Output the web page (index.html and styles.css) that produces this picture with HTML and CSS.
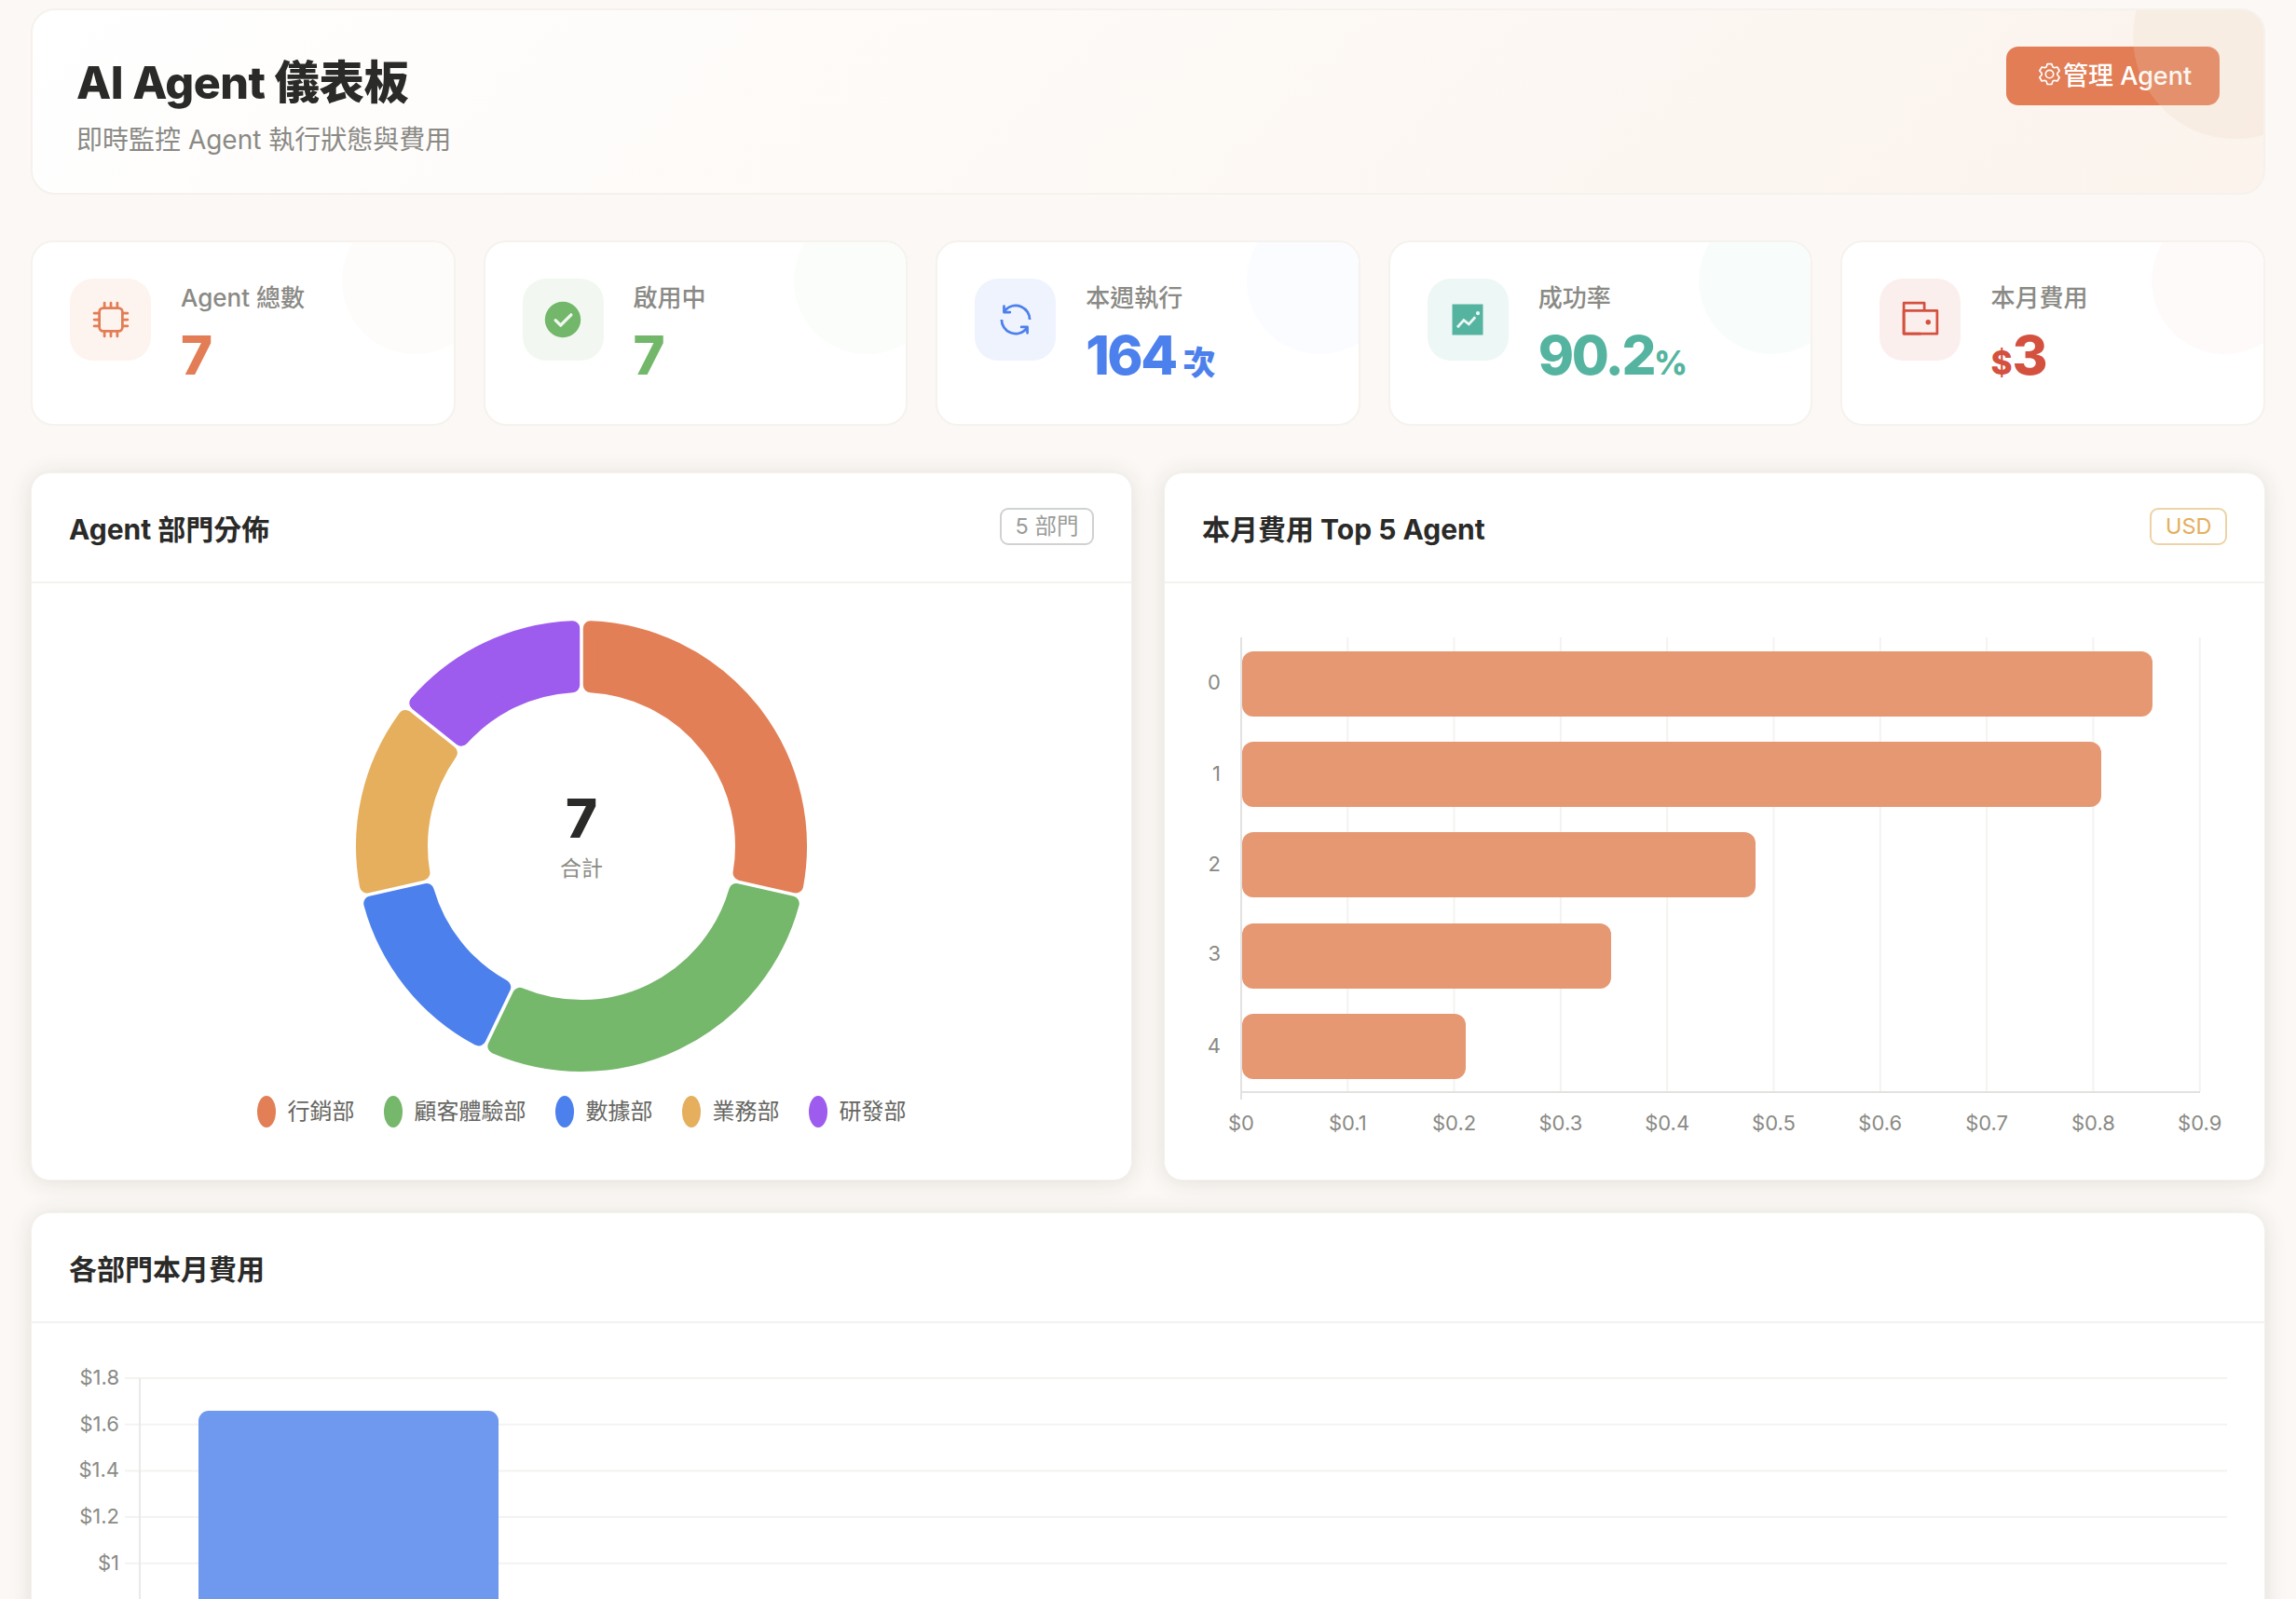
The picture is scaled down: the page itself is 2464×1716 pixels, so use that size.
FILE: index.html
```html
<!DOCTYPE html>
<html lang="zh-Hant">
<head>
  <meta charset="UTF-8">
  <title>AI Agent 儀表板</title>
  <link rel="stylesheet" href="styles.css">
</head>
<body>
  <div class="dashboard">
    <header class="page-header">
      <div>
        <h1>AI Agent 儀表板</h1>
        <p class="subtitle">即時監控 Agent 執行狀態與費用</p>
      </div>
      <button class="manage-btn">
        <svg class="icon-sm" viewBox="0 0 1024 1024"><path d="M600.704 64a32 32 0 0 1 30.464 22.208l35.2 109.376c14.784 7.232 28.928 15.36 42.432 24.512l112.384-24.192a32 32 0 0 1 34.432 15.36L944.32 364.8a32 32 0 0 1-4.032 37.504l-77.12 85.12a357.12 357.12 0 0 1 0 49.024l77.12 85.248a32 32 0 0 1 4.032 37.504l-88.704 153.6a32 32 0 0 1-34.432 15.296L708.8 803.904c-13.44 9.088-27.648 17.28-42.368 24.512l-35.264 109.376A32 32 0 0 1 600.704 960H423.296a32 32 0 0 1-30.464-22.208L357.696 828.48a351.616 351.616 0 0 1-42.56-24.64l-112.32 24.256a32 32 0 0 1-34.432-15.36L79.68 659.2a32 32 0 0 1 4.032-37.504l77.12-85.248a357.12 357.12 0 0 1 0-48.896l-77.12-85.248A32 32 0 0 1 79.68 364.8l88.704-153.6a32 32 0 0 1 34.432-15.296l112.32 24.256c13.568-9.152 27.776-17.408 42.56-24.64l35.2-109.312A32 32 0 0 1 423.232 64H600.64zm-23.424 64H446.72l-36.352 113.088-24.512 11.968a294.113 294.113 0 0 0-34.816 20.096l-22.656 15.36-116.224-25.088-65.28 113.152 79.68 88.192-1.92 27.136a293.12 293.12 0 0 0 0 40.192l1.92 27.136-79.808 88.192 65.344 113.152 116.224-25.024 22.656 15.296a294.113 294.113 0 0 0 34.816 20.096l24.512 11.968L446.72 896h130.688l36.48-113.152 24.448-11.904a288.282 288.282 0 0 0 34.752-20.096l22.592-15.296 116.288 25.024 65.28-113.152-79.744-88.192 1.92-27.136a293.12 293.12 0 0 0 0-40.256l-1.92-27.136 79.808-88.128-65.344-113.152-116.288 24.96-22.592-15.232a287.616 287.616 0 0 0-34.752-20.096l-24.448-11.904L577.344 128zM512 320a192 192 0 1 1 0 384 192 192 0 0 1 0-384m0 64a128 128 0 1 0 0 256 128 128 0 0 0 0-256"/></svg>
        管理 Agent
      </button>
    </header>

    <section class="stats">
      <div class="stat-card orange">
        <div class="stat-icon">
          <svg class="icon" viewBox="0 0 1024 1024"><path d="M320 256a64 64 0 0 0-64 64v384a64 64 0 0 0 64 64h384a64 64 0 0 0 64-64V320a64 64 0 0 0-64-64zm0-64h384a128 128 0 0 1 128 128v384a128 128 0 0 1-128 128H320a128 128 0 0 1-128-128V320a128 128 0 0 1 128-128"/><path d="M512 64a32 32 0 0 1 32 32v128h-64V96a32 32 0 0 1 32-32m160 0a32 32 0 0 1 32 32v128h-64V96a32 32 0 0 1 32-32m-320 0a32 32 0 0 1 32 32v128h-64V96a32 32 0 0 1 32-32m160 896a32 32 0 0 1-32-32V800h64v128a32 32 0 0 1-32 32m160 0a32 32 0 0 1-32-32V800h64v128a32 32 0 0 1-32 32m-320 0a32 32 0 0 1-32-32V800h64v128a32 32 0 0 1-32 32M64 512a32 32 0 0 1 32-32h128v64H96a32 32 0 0 1-32-32m0-160a32 32 0 0 1 32-32h128v64H96a32 32 0 0 1-32-32m0 320a32 32 0 0 1 32-32h128v64H96a32 32 0 0 1-32-32m896-160a32 32 0 0 1-32 32H800v-64h128a32 32 0 0 1 32 32m0-160a32 32 0 0 1-32 32H800v-64h128a32 32 0 0 1 32 32m0 320a32 32 0 0 1-32 32H800v-64h128a32 32 0 0 1 32 32"/></svg>
        </div>
        <div>
          <div class="stat-label">Agent 總數</div>
          <div class="stat-value">7</div>
        </div>
      </div>
      <div class="stat-card green">
        <div class="stat-icon">
          <svg class="icon" viewBox="0 0 1024 1024"><path d="M512 64a448 448 0 1 1 0 896 448 448 0 0 1 0-896m-55.808 536.384-99.52-99.584a38.4 38.4 0 1 0-54.336 54.336l126.72 126.72a38.272 38.272 0 0 0 54.336 0l262.4-262.464a38.4 38.4 0 1 0-54.272-54.336z"/></svg>
        </div>
        <div>
          <div class="stat-label">啟用中</div>
          <div class="stat-value">7</div>
        </div>
      </div>
      <div class="stat-card blue">
        <div class="stat-icon">
          <svg class="icon" viewBox="0 0 1024 1024"><path d="M771.776 794.88A384 384 0 0 1 128 512h64a320 320 0 0 0 555.712 216.448H654.72a32 32 0 1 1 0-64h149.056a32 32 0 0 1 32 32v148.928a32 32 0 1 1-64 0v-50.56zM276.288 295.616h92.992a32 32 0 0 1 0 64H220.16a32 32 0 0 1-32-32V178.56a32 32 0 0 1 64 0v50.56A384 384 0 0 1 896.128 512h-64a320 320 0 0 0-555.776-216.384z"/></svg>
        </div>
        <div>
          <div class="stat-label">本週執行</div>
          <div class="stat-value">164<span class="stat-unit unit-gap">次</span></div>
        </div>
      </div>
      <div class="stat-card teal">
        <div class="stat-icon">
          <svg class="icon" viewBox="0 0 1024 1024"><path d="M128 896V128h768v768zm291.712-327.296 128 102.4 180.16-201.792-47.744-42.624-139.84 156.608-128-102.4-180.16 201.792 47.744 42.624zM816 352a48 48 0 1 0-96 0 48 48 0 0 0 96 0"/></svg>
        </div>
        <div>
          <div class="stat-label">成功率</div>
          <div class="stat-value">90.2<span class="stat-unit">%</span></div>
        </div>
      </div>
      <div class="stat-card red">
        <div class="stat-icon">
          <svg class="icon" viewBox="0 0 1024 1024"><path d="M640 288h-64V128H128v704h384v32a32 32 0 0 0 32 32H96a32 32 0 0 1-32-32V96a32 32 0 0 1 32-32h512a32 32 0 0 1 32 32z"/><path d="M128 320v512h768V320zm-32-64h832a32 32 0 0 1 32 32v576a32 32 0 0 1-32 32H96a32 32 0 0 1-32-32V288a32 32 0 0 1 32-32"/><path d="M704 640a64 64 0 1 1 0-128 64 64 0 0 1 0 128"/></svg>
        </div>
        <div>
          <div class="stat-label">本月費用</div>
          <div class="stat-value"><span class="stat-unit">$</span>3</div>
        </div>
      </div>
    </section>

    <section class="chart-row">
      <div class="card">
        <div class="card-header">
          <h2>Agent 部門分佈</h2>
          <span class="badge">5 部門</span>
        </div>
        <div class="donut-body">
          <svg class="donut" viewBox="-250 -250 500 500">
            <defs>
              <path id="seg-large" d="M9.8 -233.79 A234 234 0 0 1 230.11 42.47 L170.57 28.88 A173 173 0 0 0 9.8 -172.72 Z"/>
              <path id="seg-small" d="M9.8 -233.79 A234 234 0 0 1 176.68 -153.43 L128.93 -115.35 A173 173 0 0 0 9.8 -172.72 Z"/>
            </defs>
            <use href="#seg-large" class="seg seg-orange"/>
            <use href="#seg-large" class="seg seg-green" transform="rotate(102.857)"/>
            <use href="#seg-small" class="seg seg-blue" transform="rotate(205.714)"/>
            <use href="#seg-small" class="seg seg-amber" transform="rotate(257.143)"/>
            <use href="#seg-small" class="seg seg-purple" transform="rotate(308.571)"/>
            <text class="donut-total" x="0" y="-9" text-anchor="middle">7</text>
            <text class="donut-caption" x="0" y="32" text-anchor="middle">合計</text>
          </svg>
          <div class="legend">
            <span class="legend-item"><i class="dot bg-orange"></i>行銷部</span>
            <span class="legend-item"><i class="dot bg-green"></i>顧客體驗部</span>
            <span class="legend-item"><i class="dot bg-blue"></i>數據部</span>
            <span class="legend-item"><i class="dot bg-amber"></i>業務部</span>
            <span class="legend-item"><i class="dot bg-purple"></i>研發部</span>
          </div>
        </div>
      </div>

      <div class="card">
        <div class="card-header">
          <h2>本月費用 Top 5 Agent</h2>
          <span class="badge badge-usd">USD</span>
        </div>
        <svg class="chart top-chart" viewBox="1250 626 1180 640">
          <g class="grid">
            <line x1="1446.3" y1="684" x2="1446.3" y2="1172"/>
            <line x1="1560.6" y1="684" x2="1560.6" y2="1172"/>
            <line x1="1674.9" y1="684" x2="1674.9" y2="1172"/>
            <line x1="1789.2" y1="684" x2="1789.2" y2="1172"/>
            <line x1="1903.5" y1="684" x2="1903.5" y2="1172"/>
            <line x1="2017.8" y1="684" x2="2017.8" y2="1172"/>
            <line x1="2132.1" y1="684" x2="2132.1" y2="1172"/>
            <line x1="2246.4" y1="684" x2="2246.4" y2="1172"/>
            <line x1="2360.7" y1="684" x2="2360.7" y2="1172"/>
          </g>
          <g class="axis">
            <line x1="1332" y1="684" x2="1332" y2="1180"/>
            <line x1="1332" y1="1172" x2="2361" y2="1172"/>
          </g>
          <g class="bars-orange">
            <rect x="1333" y="699" width="977" height="70" rx="12"/>
            <rect x="1333" y="796" width="922" height="70" rx="12"/>
            <rect x="1333" y="893" width="551" height="70" rx="12"/>
            <rect x="1333" y="991" width="396" height="70" rx="12"/>
            <rect x="1333" y="1088" width="240" height="70" rx="12"/>
          </g>
          <g class="tick-y">
            <text x="1310" y="740">0</text>
            <text x="1310" y="838">1</text>
            <text x="1310" y="935">2</text>
            <text x="1310" y="1031">3</text>
            <text x="1310" y="1130">4</text>
          </g>
          <g class="tick-x">
            <text x="1332" y="1213">$0</text>
            <text x="1446.3" y="1213">$0.1</text>
            <text x="1560.6" y="1213">$0.2</text>
            <text x="1674.9" y="1213">$0.3</text>
            <text x="1789.2" y="1213">$0.4</text>
            <text x="1903.5" y="1213">$0.5</text>
            <text x="2017.8" y="1213">$0.6</text>
            <text x="2132.1" y="1213">$0.7</text>
            <text x="2246.4" y="1213">$0.8</text>
            <text x="2360.7" y="1213">$0.9</text>
          </g>
        </svg>
      </div>
    </section>

    <section class="card">
      <div class="card-header">
        <h2>各部門本月費用</h2>
      </div>
      <svg class="chart dept-chart" viewBox="34 1420 2396 420">
        <g class="grid">
          <line x1="134" y1="1479" x2="2390" y2="1479"/>
          <line x1="134" y1="1528.7" x2="2390" y2="1528.7"/>
          <line x1="134" y1="1578.4" x2="2390" y2="1578.4"/>
          <line x1="134" y1="1628" x2="2390" y2="1628"/>
          <line x1="134" y1="1677.7" x2="2390" y2="1677.7"/>
          <line x1="134" y1="1727.4" x2="2390" y2="1727.4"/>
          <line x1="134" y1="1777" x2="2390" y2="1777"/>
          <line x1="134" y1="1826.8" x2="2390" y2="1826.8"/>
        </g>
        <line class="axis-light" x1="150" y1="1479" x2="150" y2="1840"/>
        <rect class="bar-blue" x="213" y="1514" width="322" height="400" rx="11"/>
        <g class="tick-y">
          <text x="128" y="1486">$1.8</text>
          <text x="128" y="1535.7">$1.6</text>
          <text x="128" y="1585.4">$1.4</text>
          <text x="128" y="1635">$1.2</text>
          <text x="128" y="1684.7">$1</text>
          <text x="128" y="1734.4">$0.8</text>
        </g>
      </svg>
    </section>
  </div>
</body>
</html>
```

FILE: styles.css
```css
/* Page */
html, body {
  margin: 0;
  height: 1716px;
  overflow: hidden;
}

body {
  background-color: #fbf8f5;
  color: #2a2a28;
  font-family: 'Inter', 'Noto Sans CJK TC', sans-serif;
}

.dashboard {
  padding: 9px 33px 0;
}

/* Header */
.page-header {
  position: relative;
  overflow: hidden;
  display: flex;
  justify-content: space-between;
  align-items: flex-start;
  box-sizing: border-box;
  height: 200px;
  padding: 39px 47px 0 47px;
  margin-bottom: 49px;
  border: 2px solid #f6f1ec;
  border-radius: 26px;
  background: linear-gradient(135deg, #ffffff 0%, #fbf3ec 100%);
}

.page-header::after {
  content: "";
  position: absolute;
  top: -82px;
  right: -80px;
  width: 220px;
  height: 220px;
  border-radius: 50%;
  background-color: rgba(236, 215, 190, 0.22);
  pointer-events: none;
}

h1 {
  margin: 10px 0 0;
  font-size: 48.4px;
  font-weight: 800;
  line-height: 58px;
  letter-spacing: -0.5px;
}

.subtitle {
  margin: 13px 0 0;
  color: #8a8a85;
  font-size: 28px;
  line-height: 38px;
}

.manage-btn {
  display: flex;
  align-items: center;
  gap: 1px;
  box-sizing: border-box;
  width: 229px;
  height: 63px;
  padding: 0 0 4px 33px;
  border: none;
  border-radius: 13px;
  background-color: #e27d55;
  color: #ffffff;
  font-family: inherit;
  font-size: 27px;
  font-weight: 500;
  white-space: nowrap;
}

.icon-sm {
  width: 27px;
  height: 27px;
  fill: currentColor;
}

/* Stat cards */
.stats {
  display: grid;
  grid-template-columns: repeat(5, 1fr);
  gap: 30px;
  margin-bottom: 50px;
}

.stat-card {
  position: relative;
  overflow: hidden;
  display: flex;
  align-items: flex-start;
  gap: 32px;
  box-sizing: border-box;
  height: 199px;
  padding: 39px 40px;
  border: 2px solid #f6f2ee;
  border-radius: 24px;
  background-color: #ffffff;
}

.stat-card::after {
  content: "";
  position: absolute;
  top: -37px;
  right: -37px;
  width: 157px;
  height: 157px;
  border-radius: 50%;
  background-color: var(--accent-faint);
}

.stat-icon {
  display: flex;
  align-items: center;
  justify-content: center;
  width: 87px;
  height: 88px;
  border-radius: 25px;
  background-color: var(--accent-soft);
}

.icon {
  width: 44px;
  height: 44px;
  fill: var(--accent);
}

.stat-label {
  color: #8a8a85;
  font-size: 26px;
  font-weight: 500;
  line-height: 42px;
}

.stat-value {
  margin-top: 6px;
  color: var(--accent);
  font-size: 58px;
  font-weight: 800;
  line-height: 68px;
  letter-spacing: -2.5px;
}

.stat-unit {
  font-size: 35px;
  letter-spacing: 0;
}

.unit-gap {
  margin-left: 8px;
}

.orange { --accent: #e27d55; --accent-soft: #fdf3ef; --accent-faint: #fefcfa; }
.green { --accent: #73b76a; --accent-soft: #f2f8f1; --accent-faint: #fbfdfa; }
.blue { --accent: #4c80ec; --accent-soft: #eff3fd; --accent-faint: #fbfcff; }
.teal { --accent: #55b4a0; --accent-soft: #edf7f5; --accent-faint: #f8fdfb; }
.red { --accent: #d4513f; --accent-soft: #fbefee; --accent-faint: #fefafa; }

/* Chart cards */
.chart-row {
  display: grid;
  grid-template-columns: repeat(2, 1fr);
  gap: 34px;
  margin-bottom: 34px;
}

.card {
  overflow: hidden;
  box-sizing: border-box;
  border: 1px solid #f3f1ed;
  border-radius: 20px;
  background-color: #ffffff;
  box-shadow: 0 2px 24px rgba(60, 55, 45, 0.12);
}

.chart-row .card {
  height: 760px;
}

.card-header {
  display: flex;
  justify-content: space-between;
  align-items: center;
  box-sizing: border-box;
  height: 118px;
  padding: 0 40px;
  border-bottom: 2px solid #f3f2ef;
}

h2 {
  margin: 0;
  font-size: 30px;
  font-weight: 700;
}

.badge {
  margin-top: -2px;
  padding: 2px 14.5px;
  border: 2px solid #cfd2d0;
  border-radius: 9px;
  color: #999c99;
  font-size: 23.5px;
  line-height: 32px;
}

.badge-usd {
  border-color: #edd3a5;
  color: #e5ae5c;
}

/* Donut */
.donut-body {
  display: flex;
  flex-direction: column;
  align-items: center;
  padding-top: 32px;
}

.donut {
  display: block;
  width: 500px;
  height: 500px;
}

.seg {
  stroke-width: 16;
  stroke-linejoin: round;
}

.seg-orange { fill: #e27f56; stroke: #e27f56; }
.seg-green { fill: #75b76b; stroke: #75b76b; }
.seg-blue { fill: #4c80ec; stroke: #4c80ec; }
.seg-amber { fill: #e5af5e; stroke: #e5af5e; }
.seg-purple { fill: #9d5cee; stroke: #9d5cee; }

.donut-total {
  fill: #2a2a28;
  font-size: 58px;
  font-weight: 800;
}

.donut-caption {
  fill: #8a8a85;
  font-size: 23px;
}

.legend {
  display: flex;
  gap: 31px;
  margin-top: 18px;
}

.legend-item {
  display: flex;
  align-items: center;
  gap: 13px;
  color: #666662;
  font-size: 24px;
  line-height: 34px;
}

.dot {
  width: 20px;
  height: 34px;
  border-radius: 50%;
}

.bg-orange { background-color: #e27f56; }
.bg-green { background-color: #75b76b; }
.bg-blue { background-color: #4c80ec; }
.bg-amber { background-color: #e5af5e; }
.bg-purple { background-color: #9d5cee; }

/* Axis charts */
.chart {
  display: block;
}

.top-chart {
  width: 1180px;
  height: 640px;
}

.dept-chart {
  width: 2396px;
  height: 420px;
}

.grid line {
  stroke: #f3f3f1;
  stroke-width: 2;
}

.axis line {
  stroke: #e2e2e0;
  stroke-width: 2;
}

.axis-light {
  stroke: #e9e9e7;
  stroke-width: 2;
}

.bars-orange rect {
  fill: #e69873;
}

.bar-blue {
  fill: #6f99ee;
}

.tick-x text,
.tick-y text {
  fill: #8a8a85;
  font-size: 22px;
}

.tick-x text {
  text-anchor: middle;
}

.tick-y text {
  text-anchor: end;
}
```
